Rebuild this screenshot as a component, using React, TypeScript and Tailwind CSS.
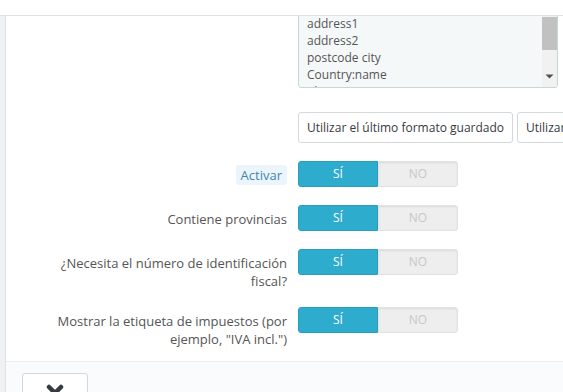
const font = { fontFamily: '"Open Sans", "Liberation Sans", sans-serif' };

const Switch = () => (
  <div className="flex h-[26px] w-[160px] text-[12px] leading-none">
    <div className="flex flex-1 items-center justify-center rounded-l-[3px] border border-[#2a9dbd] bg-[#2eacce] text-white">
      SÍ
    </div>
    <div className="flex flex-1 items-center justify-center rounded-r-[3px] border border-[#e2e2e2] bg-[#eeeeee] text-[#c7c7c7] shadow-[inset_0_1px_2px_rgba(0,0,0,0.08)]">
      NO
    </div>
  </div>
);

const Row = ({ label }: { label: React.ReactNode }) => (
  <div className="mb-[18px] flex items-start">
    <div className="-mb-[1px] w-[292px] shrink-0 pr-[11px] pt-[5px] text-right text-[13px] leading-[18px] text-[#555]">
      {label}
    </div>
    <Switch />
  </div>
);

export default function App() {
  return (
    <div
      className="flex h-[392px] w-[563px] flex-col overflow-hidden bg-white"
      style={font}
    >
      <div className="h-[16px] shrink-0 border-b border-[#dfe2e4] bg-white" />
      <div className="flex flex-1 overflow-hidden">
        <div className="w-[6px] shrink-0 border-r border-[#e0e3e5] bg-[#eff1f2]" />
        <div className="flex flex-1 flex-col overflow-hidden">
          <div className="flex-1 overflow-hidden">
            <div className="flex">
              <div className="w-[292px] shrink-0" />
              <div className="relative -mt-[41px] mb-[24px] h-[113px] w-[260px] shrink-0 overflow-hidden rounded-[3px] border border-[#c7d6db] bg-[#f5f8f9]">
                <div className="pl-[8px] pt-[5px] text-[12px] leading-[17px] text-[#555]">
                  <div>firstname lastname</div>
                  <div>company</div>
                  <div>address1</div>
                  <div>address2</div>
                  <div>postcode city</div>
                  <div>Country:name</div>
                  <div>phone</div>
                </div>
                <div className="absolute right-0 top-0 h-full w-[15px] bg-[#f1f1f1]">
                  <div className="mt-[41px] h-[33px] w-full bg-[#c1c1c1]" />
                  <svg
                    className="absolute bottom-[8px] left-[3px]"
                    width="9"
                    height="5"
                    viewBox="0 0 9 5"
                  >
                    <path d="M0.5 0.5 L8.5 0.5 L4.5 4.5 Z" fill="#505050" />
                  </svg>
                </div>
              </div>
            </div>

            <div className="mb-[18px] flex whitespace-nowrap">
              <div className="w-[292px] shrink-0" />
              <div className="mr-[4px] flex h-[31px] items-center rounded-[3px] border border-[#d3d8db] bg-white px-[8px] text-[12px] text-[#363a41]">
                Utilizar el último formato guardado
              </div>
              <div className="flex h-[31px] items-center rounded-[3px] border border-[#d3d8db] bg-white px-[8px] text-[12px] text-[#363a41]">
                Utilizar el formato por defecto
              </div>
            </div>

            <Row
              label={
                <span className="-my-[1px] inline-block rounded-[3px] bg-[#ecf5fb] px-[5px] py-[1px] text-[#3d88b3]">
                  Activar
                </span>
              }
            />
            <Row label="Contiene provincias" />
            <Row
              label={
                <>
                  ¿Necesita el número de identificación
                  <br />
                  fiscal?
                </>
              }
            />
            <Row
              label={
                <>
                  Mostrar la etiqueta de impuestos (por
                  <br />
                  ejemplo, "IVA incl.")
                </>
              }
            />
          </div>
          <div className="h-[31px] shrink-0 border-t border-[#eaedef] bg-[#fafbfc] pl-[16px] pt-[11px]">
            <div className="flex h-[40px] w-[66px] justify-center rounded-[3px] border border-[#d3d8db] bg-white pt-[10px]">
              <svg width="18" height="18" viewBox="0 0 18 18">
                <path
                  d="M3 3 L15 15 M15 3 L3 15"
                  stroke="#363a41"
                  strokeWidth="4.5"
                  strokeLinecap="round"
                />
              </svg>
            </div>
          </div>
        </div>
      </div>
    </div>
  );
}
